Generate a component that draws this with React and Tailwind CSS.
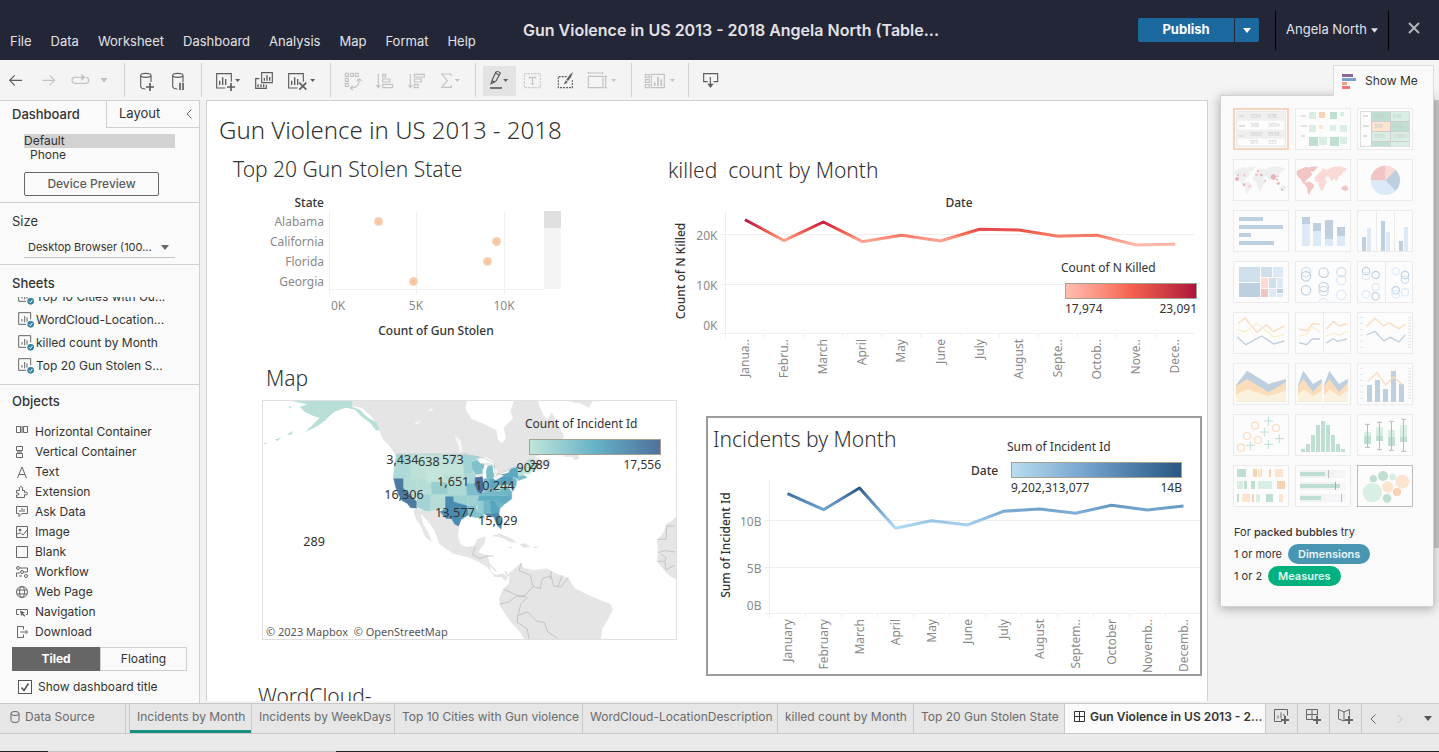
import React, { useState } from "react";

const MONTHS = ["January", "February", "March", "April", "May", "June", "July", "August", "September", "October", "November", "December"];

/* ---------- Header ---------- */

function Caret({ className }) {
  return (
    <svg viewBox="0 0 8 5" className={className} fill="currentColor" aria-hidden="true">
      <path d="M0 0h8L4 5z" />
    </svg>
  );
}

function Header() {
  return (
    <header className="flex h-[60px] shrink-0 bg-[#232636] text-[#e2e2e6]">
      <nav className="flex w-[523px] shrink-0 items-end gap-[19px] pb-[9px] pl-[10px] text-[13px] leading-5">
        {["File", "Data", "Worksheet", "Dashboard", "Analysis", "Map", "Format", "Help"].map((m) => (
          <button key={m} type="button">{m}</button>
        ))}
      </nav>
      <h1 className="min-w-0 flex-1 truncate pt-[18px] text-base leading-6 font-semibold">
        Gun Violence in US 2013 - 2018 Angela North (Table...
      </h1>
      <div className="flex shrink-0 items-start gap-4">
        <div className="mt-[18px] flex gap-px">
          <button type="button" className="h-6 w-24 rounded-l-xs bg-[#1b699f] text-[13px] font-bold text-white">Publish</button>
          <button type="button" aria-label="Publish options" className="flex h-6 w-6 items-center justify-center rounded-r-xs bg-[#1b699f] text-white">
            <Caret className="h-[5px] w-2" />
          </button>
        </div>
        <button type="button" className="mt-[10px] flex h-10 w-[114px] items-center justify-center gap-1 border-x border-black text-[13px]">
          Angela North
          <Caret className="h-[5px] w-[7px]" />
        </button>
        <button type="button" aria-label="Close" className="mt-[22px] mr-[19px] ml-[3px] text-[#b4b4ba]">
          <svg viewBox="0 0 12 12" className="h-3 w-3" stroke="currentColor" strokeWidth="2"><path d="M1 1l10 10M11 1L1 11" /></svg>
        </button>
      </div>
    </header>
  );
}

/* ---------- Toolbar: icons share one drawing sheet, three units to a pixel ---------- */

const DARK = "#5c5c5c";
const LIGHT = "#c2c2c2";

function Tool({ label, x, w, c = DARK, active, children }) {
  return (
    <button type="button" aria-label={label} className="relative h-10 shrink-0" style={{ width: w }}>
      <svg viewBox={`${x * 3} 180 ${w * 3} 120`} className="h-10 w-full" fill="none" stroke={c} strokeWidth="3.4">
        {active && <rect x={x * 3} y="198" width={w * 3} height="90" fill="#e3e3e3" stroke="none" />}
        {children(c)}
      </svg>
    </button>
  );
}
const Sep = () => <span className="my-[3px] w-px shrink-0 self-stretch bg-[#d2d2d2]" />;
const Tri = ({ x, y = 237, c }) => <path d={`M${x - 7.5} ${y}h15l-7.5 9z`} fill={c} stroke="none" />;
const Cyl = ({ x }) => (
  <path d={`M${x} 226v34q2 7 14 7M${x} 226q0-6 15.500-6t15.500 6q0 6-15.500 6t-15.500-6M${x + 31} 226v20`} />
);
const MiniBars = ({ x, y, c }) => (
  <path d={`M${x} ${y}v-13M${x + 9} ${y}v-23M${x + 18} ${y}v-18`} stroke={c} strokeWidth="4" />
);

function Toolbar() {
  return (
    <div className="flex h-[40px] shrink-0 bg-[#f4f4f4]">
      <Tool label="Undo" x={0} w={32}>{() => <path d="M66 241H29M44 226l-15 15 15 15" />}</Tool>
      <Tool label="Redo" x={32} w={33} c={LIGHT}>{() => <path d="M127 241h37M149 226l15 15-15 15" />}</Tool>
      <Tool label="Replay" x={65} w={31} c={LIGHT}>{(c) => (<><path d="M238 232h-14q-8 0-8 9t8 9h34q8 0 8-9t-8-9" /><path d="M238 232h10" /><path d="M244 222l13 10-13 10z" fill={c} stroke="none" /></>)}</Tool>
      <Tool label="Replay options" x={96} w={28} c={LIGHT}>{(c) => <path d="M301 234h22l-11 14z" fill={c} stroke="none" />}</Tool>
      <Sep />
      <Tool label="New data source" x={125} w={37}>{() => (<><Cyl x={422} /><path d="M438 261h24M450 249v24" strokeWidth="5" /></>)}</Tool>
      <Tool label="Pause updates" x={162} w={39}>{() => (<><Cyl x={518} /><path d="M540 248v22M549 248v22" strokeWidth="5" /></>)}</Tool>
      <Sep />
      <Tool label="New worksheet" x={202} w={45}>{(c) => (<><path d="M676 264h-26v-43h44v24" /><MiniBars x={659} y={255} c={c} /><path d="M681 261h24M693 249v24" strokeWidth="5" /><Tri x={713} c={c} /></>)}</Tool>
      <Tool label="Duplicate" x={247} w={33}>{(c) => (<><path d="M785 218h32v30h-32zM778 236h-11v29h32v-11" /><path d="M793 242v-8M801 242v-16M809 242v-11M774 262v-9M783 262v-9M791 262v-9" strokeWidth="4" stroke={c} /></>)}</Tool>
      <Tool label="Clear sheet" x={280} w={50}>{(c) => (<><path d="M893 264h-27v-43h44v24" /><MiniBars x={875} y={255} c={c} /><path d="M898 248l21 21M919 248l-21 21" strokeWidth="5" /><Tri x={938} c={c} /></>)}</Tool>
      <Sep />
      <Tool label="Swap rows and columns" x={331} w={37} c={LIGHT}>{() => (<><path d="M1036 220h9v9h-9zM1051 220h9v9h-9zM1066 220h9v9h-9zM1036 235h9v9h-9zM1036 250h9v9h-9z" /><path d="M1078 238q0 26-25 26M1070 243l8-7 7 7M1059 256l-8 8 8 7" /></>)}</Tool>
      <Tool label="Sort ascending" x={368} w={32} c={LIGHT}>{() => <path d="M1135 222v40M1129 255l6 8 6-8M1148 223h9v8h-9zM1148 237h21v9h-21zM1148 253h30v10h-30z" />}</Tool>
      <Tool label="Sort descending" x={400} w={32} c={LIGHT}>{() => <path d="M1231 222v40M1225 255l6 8 6-8M1243 223h30v8h-30zM1243 237h21v9h-21zM1243 253h11v10h-11z" />}</Tool>
      <Tool label="Totals" x={432} w={43} c={LIGHT}>{(c) => (<><path d="M1353 228v-6h-28l17 20-17 20h29v-7" /><Tri x={1372} c={c} /></>)}</Tool>
      <Sep />
      <span className="w-[7px] shrink-0" />
      <Tool label="Highlight" x={483} w={33} active>{(c) => (<><path d="M1488 216q6-4 13 3l-13 24-9 3-2-7zM1477 239l-4 12 12-5" /><path d="M1485 218l13 8" /><path d="M1470 264h36" strokeWidth="5" /><Tri x={1517} c={c} /></>)}</Tool>
      <Tool label="Show mark labels" x={516} w={33} c={LIGHT}>{() => (<><path d="M1573 221h48v42h-48z" strokeDasharray="7 3" opacity=".8" /><path d="M1588 236v-4h19v4M1597.500 232v20M1592 252h11" /></>)}</Tool>
      <Tool label="Format" x={549} w={33}>{(c) => (<><path d="M1700 230h-25v33h42v-22" strokeDasharray="6 3" /><path d="M1719 216q-13 9-20 23l5 4q11-11 15-27zM1697 241l6 5q-4 7-12 6 5-4 6-11z" fill={c} stroke="none" /></>)}</Tool>
      <Tool label="Fit" x={582} w={49} c={LIGHT}>{(c) => (<><path d="M1765 229h44v34h-44zM1765 219h43M1765 215v8M1808 215v8M1817 229v34M1813 229h8M1813 263h8" /><Tri x={1841} c={c} /></>)}</Tool>
      <Sep />
      <Tool label="Show cards" x={632} w={56} c={LIGHT}>{(c) => (<><path d="M1936 224h12v8h-12zM1936 239h12v8h-12zM1936 254h12v9h-12zM1954 223h39v40h-39z" /><path d="M1964 258v-12M1974 258v-27M1984 258v-20" strokeWidth="5" /><Tri x={2017} c={c} /></>)}</Tool>
      <Sep />
      <Tool label="Download" x={689} w={43}>{(c) => (<><path d="M2123 245h-12v-24h42v24h-12M2131 231v22" /><path d="M2122 251h19l-9.500 13z" fill={c} stroke="none" /></>)}</Tool>
    </div>
  );
}

/* ---------- Sidebar ---------- */

const OBJECTS = [
  ["Horizontal Container", <><path d="M1.500 1.500h4v6h-4zM8.500 1.500h4v6h-4z" /><path d="M6 1h2v7H6z" fill="#aaa" stroke="none" /></>],
  ["Vertical Container", <><path d="M1.500 1.500h6v4h-6zM1.500 8.500h6v4h-6z" /><path d="M2 6h5v2H2z" fill="#aaa" stroke="none" /></>],
  ["Text", <path d="M2.500 13L7 2l4.500 11M4 9.500h6" />],
  ["Extension", <path d="M1.500 5.500h3q-1-4 1.500-4t1.500 4h2v2q3-1.500 3 1t-3 1v3h-8v-2.500q2.500.5 2.500-1t-2.500-1z" />],
  ["Ask Data", <><path d="M1.500 1.500h11v7H7l-3 3v-3H1.500z" /><path d="M5 7V5M7 7V3M9 7V4" /></>],
  ["Image", <><path d="M1.500 1.500h11v11h-11zM2 9l3.500-1L8 10l4-5" /><circle cx="5" cy="5" r="1" fill="#666" /></>],
  ["Blank", <path d="M1.500 1.500h11v11h-11z" />],
  ["Workflow", <><path d="M4.500 3h8v4H8M1.500 12V8H5M4 11h3" /><circle cx="3" cy="3" r="1.500" /><circle cx="7" cy="7" r="1.500" /><circle cx="11" cy="11" r="1.500" /></>],
  ["Web Page", <><circle cx="7" cy="7" r="5.500" /><ellipse cx="7" cy="7" rx="2.500" ry="5.500" /><path d="M2 5h10M2 9h10" /></>],
  ["Navigation", <><path d="M4 9.500H1.500v-5h11v5H11" /><path d="M5 5.500l5 2-2 .8 2.500 2.500-1 1L7 9.500l-.8 2z" fill="#666" stroke="none" /></>],
  ["Download", <path d="M8.500 4.500v-3h-6v11h6v-3M5.500 7h7M10.500 5l2 2-2 2" />],
];

function SheetIcon() {
  return (
    <svg viewBox="0 0 48 48" className="h-4 w-4 shrink-0" fill="none" stroke="#666" strokeWidth="3" aria-hidden="true">
      <path d="M24 37H2V2h36v20" />
      <path d="M12 29v-8M20 31V12M27 29V16" />
      <circle cx="38" cy="37" r="10" fill="#33809f" stroke="none" />
      <path d="M33 37l4 4 6-8" stroke="#fff" />
    </svg>
  );
}

function Sidebar() {
  const [tiled, setTiled] = useState(true);
  const [title, setTitle] = useState(true);
  return (
    <aside className="flex w-[200px] shrink-0 flex-col border-t border-r border-[#cfcfcf] bg-[#fafafa] text-xs text-[#333]">
      <div className="flex h-[27px] shrink-0 text-[13px]">
        <button type="button" className="w-[106px] pl-3 text-left font-medium">Dashboard</button>
        <div className="flex flex-1 items-center justify-between border-b border-l border-[#cfcfcf] pr-[7px] pl-3">
          <button type="button">Layout</button>
          <button type="button" aria-label="Collapse pane">
            <svg viewBox="0 0 6 10" className="h-[10px] w-[6px]" fill="none" stroke="#666"><path d="M5.500 .5L1 5l4.500 4.500" /></svg>
          </button>
        </div>
      </div>

      <section className="flex h-[75px] shrink-0 flex-col border-b border-[#cfcfcf] pt-[6px] pr-6 pl-6">
        <button type="button" className="h-[14px] bg-[#d2d2d2] text-left leading-[14px]">Default</button>
        <button type="button" className="h-[14px] pl-[6px] text-left leading-[14px]">Phone</button>
        <button type="button" className="mt-[10px] h-6 w-[135px] rounded-xs border border-[#666] font-medium text-[#5c5c5c]">Device Preview</button>
      </section>

      <section className="h-[62px] shrink-0 border-b border-[#cfcfcf] pt-[9px]">
        <label htmlFor="size" className="block pl-3 text-[13px] leading-[18px]">Size</label>
        <div className="relative mx-6 mt-[7px] border-b border-[#c4c4c4]">
          <select id="size" className="h-5 w-full appearance-none bg-transparent pl-1 text-[11px] outline-none">
            <option>Desktop Browser (100...</option>
          </select>
          <Caret className="pointer-events-none absolute top-2 right-[6px] h-[5px] w-2 text-[#666]" />
        </div>
      </section>

      <section className="h-[120px] shrink-0 border-b border-[#cfcfcf] pt-2">
        <h2 className="pl-3 text-[13px] leading-5 font-medium">Sheets</h2>
        <ul className="mt-1 flex h-20 flex-col justify-end overflow-hidden">
          {["Top 10 Cities with Gu...", "WordCloud-Location...", "killed count by Month", "Top 20 Gun Stolen S..."].map((s) => (
            <li key={s} className="flex h-[23px] shrink-0 items-center gap-[2px] pl-[18px]">
              <SheetIcon />
              {s}
            </li>
          ))}
        </ul>
      </section>

      <section className="pt-[6px]">
        <h2 className="pl-3 text-[13px] leading-5 font-medium">Objects</h2>
        <ul className="mt-[11px]">
          {OBJECTS.map(([name, icon]) => (
            <li key={name} className="flex h-5 items-center gap-[6px] pl-[15px]">
              <svg viewBox="0 0 14 14" className="h-[14px] w-[14px]" fill="none" stroke="#666" aria-hidden="true">{icon}</svg>
              {name}
            </li>
          ))}
        </ul>
      </section>

      <div className="mt-[5px] mr-3 ml-3 flex h-6 shrink-0">
        <button type="button" onClick={() => setTiled(true)} className="w-[88px] bg-[#666] font-bold text-white">Tiled</button>
        <button type="button" onClick={() => setTiled(!tiled)} className="flex-1 border border-[#cfcfcf]">Floating</button>
      </div>
      <label className="mt-2 ml-[18px] flex items-center gap-[6px] leading-4">
        <span className="relative h-[14px] w-[14px]">
          <input type="checkbox" checked={title} onChange={() => setTitle(!title)} className="block h-[14px] w-[14px] appearance-none border border-[#555] bg-white" />
          {title && (
            <svg viewBox="0 0 14 14" className="pointer-events-none absolute inset-0" fill="none" stroke="#555" strokeWidth="1.600"><path d="M3.500 7.500l2.500 3 4.500-7" /></svg>
          )}
        </span>
        Show dashboard title
      </label>
    </aside>
  );
}

/* ---------- Dashboard views ---------- */

function Legend({ title, bar, min, max, className, barWidth }) {
  return (
    <div className={"absolute text-xs leading-4 font-normal text-[#333] " + className}>
      <div>{title}</div>
      <div className={"mt-[7px] ml-1 h-4 border border-[#a5a08f] " + bar + " " + barWidth} />
      <div className={"mt-[2px] ml-1 flex justify-between " + barWidth}>
        <span>{min}</span>
        <span>{max}</span>
      </div>
    </div>
  );
}

function GunStolen() {
  const rows = [["Alabama", 378.5], ["California", 496.5], ["Florida", 487.5], ["Georgia", 413.5]];
  return (
    <svg viewBox="207 189 461 162" className="block w-full text-xs" fill="#8a8a8a">
      <defs>
        <radialGradient id="dot"><stop offset="0" stopColor="#f8bd90" /><stop offset="1" stopColor="#f4d6bd" /></radialGradient>
      </defs>
      <text x="324" y="207" textAnchor="end" fill="#333" fontWeight="500">State</text>
      <path d="M329.500 211v83M416.500 211v83M504.500 211v83M329 289.500h215" stroke="#f0f0f0" />
      {rows.map(([name, x], i) => (
        <g key={name}>
          <text x="324" y={226 + i * 20} textAnchor="end">{name}</text>
          <circle cx={x} cy={221.5 + i * 20} r="4.500" fill="url(#dot)" />
        </g>
      ))}
      <rect x="544" y="211" width="17" height="78" fill="#f4f4f4" />
      <rect x="544" y="211" width="17" height="17" fill="#e0e0e0" />
      <text x="331" y="310">0K</text>
      <text x="416" y="310" textAnchor="middle">5K</text>
      <text x="504" y="310" textAnchor="middle">10K</text>
      <text x="436" y="335" textAnchor="middle" fill="#333" fontWeight="500">Count of Gun Stolen</text>
    </svg>
  );
}

const STATES = [
  ["#a8d6d6", "425,178 470,178 470,208 420,210"],
  ["#add9d6", "420,208 470,208 468,252 416,252"],
  ["#4e79a0", "417,252 447,252 447,280 488,322 486,340 468,339 458,326 443,318 432,300 424,280"],
  ["#b2dcd6", "447,252 485,252 485,318 447,280"],
  ["#bde1d9", "470,178 482,178 490,205 514,225 514,262 468,252"],
  ["#c0e3da", "480,178 565,178 565,222 500,222 488,200"],
  ["#c3e5dc", "514,222 567,222 567,264 514,264"],
  ["#b6ded7", "485,252 514,252 514,264 530,264 528,300 485,300"],
  ["#a4d3d4", "488,300 528,300 528,348 512,349 486,336"],
  ["#99ced1", "530,262 580,262 580,300 530,300"],
  ["#b7ddd8", "528,300 573,300 573,343 540,345 528,349"],
  ["#bde1da", "567,178 624,178 629,210 567,210"],
  ["#c1e4db", "567,210 629,210 631,240 567,240"],
  ["#b9dfd8", "567,240 631,240 637,268 580,268 567,258"],
  ["#add8d5", "580,268 637,268 638,302 580,302"],
  ["#9bd0d2", "573,302 638,302 638,330 612,326 596,320 596,306 573,306"],
  ["#4a8cb0", "573,306 596,306 596,320 612,326 638,332 642,360 620,374 612,394 600,388 590,370 576,372 556,350 573,345"],
  ["#a2d4d5", "624,178 675,186 656,204 655,235 629,235"],
  ["#acd8d6", "629,235 661,235 666,252 658,265 636,265"],
  ["#7bbdcb", "636,266 660,266 678,296 674,303 638,303"],
  ["#a0d2d3", "638,303 673,303 670,334 640,334"],
  ["#82c2cc", "640,334 664,334 668,352 686,356 690,370 662,368 642,362"],
  ["#80c1cc", "652,204 668,196 688,208 686,236 664,238 655,224"],
  ["#4c6c9b", "663,248 684,246 688,284 680,298 670,290 661,268"],
  ["#73b8c8", "688,252 706,250 706,282 688,290"],
  ["#5ca8c0", "706,250 718,252 734,246 734,270 722,284 706,280"],
  ["#7abdca", "696,216 712,212 720,232 716,250 696,250"],
  ["#77bbca", "678,298 706,282 722,284 734,290 726,303 674,304"],
  ["#60adc3", "674,304 744,303 730,318 670,319"],
  ["#94cbd0", "672,319 688,319 688,358 668,352"],
  ["#72b7c8", "688,319 706,319 710,354 688,356"],
  ["#57a5c0", "706,319 722,319 736,342 734,356 710,354"],
  ["#6bb3c6", "722,319 738,316 752,326 736,342"],
  ["#5fabc3", "744,303 772,300 772,312 752,327 730,318"],
  ["#6fb6c7", "734,286 756,272 772,290 772,300 726,303"],
  ["#b0dad6", "722,284 734,270 748,270 734,290"],
  ["#589fbd", "734,246 774,244 780,258 770,270 734,270"],
  ["#5ba9c1", "740,240 764,232 770,222 790,217 792,252 776,246 742,246"],
  ["#71b7c7", "776,250 786,252 786,268 776,290 768,272"],
  ["#b9dfd8", "790,217 804,214 808,240 792,244"],
  ["#78bccb", "792,244 810,242 818,248 790,258"],
  ["#bde2d9", "806,218 822,194 836,194 848,214 824,238 808,236"],
  ["#4b88ae", "690,357 732,355 742,382 740,403 728,392 718,366 704,366"],
];

const MAP_LABELS = [["3,434", 443, 209], ["638", 523, 215], ["573", 595, 209], ["1,651", 596, 273], ["10,244", 721, 285], ["907", 819, 231], ["16,306", 448, 312], ["13,577", 601, 366], ["15,029", 730, 390], ["289", 178, 453]];

function IncidentMap() {
  return (
    <div className="relative -mr-[9px] ml-[55px] border border-[#e0e0e0]">
      <svg viewBox="24 18 1242 717" className="block w-full" fontSize="38">
        <g fill="#e5e5e5">
          <path d="M293 18H636L634 46 652 72 690 88 726 106 730 132 742 146 754 130 748 98 776 70 768 48 778 18H850L866 60 880 74 892 52 906 80 930 124 912 152 870 176 842 186 862 196 886 190 888 208 852 226 836 214 800 236 700 250 425 186 408 158 384 132 372 104 350 64 320 38 293 34Z" />
          <path d="M928 186l20-34 16 12 12 28-14 4-8-10zM940 18h76l-12 20-22-12z" />
          <path d="M486 340l26 10 30-4 16 4 18 22 14-2 10 18 14 7-4 30 8 22 16 10 24-4 10-20 26-8-4 22-12 16-6 10 28 10 6 24 4 24 12 10 24-4 14 8-6 16-12-14-22 0-20-28-26-16-30-14-48-12-42-30-14-40-24-32-18-18 8 32 16 26 10 28-20-16-12-30-16-24-8-24z" />
          <path d="M764 536l14-12 22-20 8 16 30 6 40-4 26 14 40 16 18 30 30 14 40 18 36 14 8 18-18 34-14 22-4 32H810l-12-20-26-28-20-28-16-24-2-20 10-28 20-20z" />
          <path d="M712 424l24-8 40 18 12 10-22-2-20-12zM794 448l18-2 18 10-20 4zM760 456l14 2-6 4zM838 456h12v4h-12z" />
          <path d="M1266 366l-16 16-12 4-10 28-20 24 4 34-4 28 22 26 18 20 18 8z" />
        </g>
        <g fill="#fff"><path d="M600 122l18 14 6 32-6 4zM478 86l22-10-10 12zM516 52l16-12 4 6z" opacity=".7" /></g>
        <path d="M662 456l-8 24 22 12 22-8 18 0M708 512l18 18M752 530l10 14M800 506l-6 22 34 14 8 34 22 6 6-30 26-8 8 30 22 4 22-30M892 530l-4 24M924 542l-12 32M746 584l24 10 28 14 16-8 22-24M738 628l26-6 26-20 28 6M820 652l-30 12-2 20 30 18 6 30M820 652l26 28 24 4 10 28 30 20M790 664l10-36 18-20M1210 434l26 0 2-40h24M1212 474l20-6 30 4M1212 500l20 0 4 26 26-14M1222 478l14 12-4 10" fill="none" stroke="#bdbdbd" strokeWidth="2.500" />
        <g fill="#b7dfd7">
          <path d="M110 18H293V36l22 8 22 22 30 18 8 22-12 0-16-22-28-20-18-20-28-6-34 12-16 14-14 14-26 18-34 16 24-22 22-22-18-4-28-14-14-14 22-8z" />
          <path d="M100 32l12 4-8 4zM96 118l20-10-8 12zM60 134l18-6-10 10zM26 144l12 0-8 4zM192 72l16-8-6 12z" />
        </g>
        {STATES.map(([fill, points]) => (
          <polygon key={points} points={points} fill={fill} stroke={fill} strokeWidth="1.500" strokeLinejoin="round" />
        ))}
        <path d="M684 226l10-16 6 2-6 18 2 20-10 0zM668 194l24-8 22 12 10 12-24-6-22 2zM716 218l12 8-4 18-8-12zM716 252l24-12 8 2-24 14zM738 234l24-6 0 6-20 4z" fill="#fff" />
        <path d="M425 178H628L636 174 642 180 690 190 720 206 722 236 736 238 776 218 804 212 822 194" fill="none" stroke="#b9c4c2" strokeWidth="2" />
        <path d="M24 690H588v45H24z" fill="#fff" opacity=".75" />
        <g fill="#333" textAnchor="middle">
          {MAP_LABELS.map(([t, x, y]) => <text key={t} x={x} y={y}>{t}</text>)}
        </g>
      </svg>
      <p className="absolute bottom-0 left-[3px] text-[11px] leading-[14px] whitespace-pre text-[#555]">© 2023 Mapbox  © OpenStreetMap</p>
      <Legend title="Count of Incident Id" min="289" max="17,556" className="top-[15px] right-[15px]" barWidth="w-[132px]"
        bar="bg-linear-to-r from-[#c0e5da] via-[#66b2c8] to-[#4f719c]" />
    </div>
  );
}

function MonthChart({ viewBox, id, left, step, top, base, right, grids, points, labelTop, months, zero, yTitle, stops, range, children }) {
  const pts = points.map((y, i) => `${(left + step * (i + 0.5)).toFixed(1)},${y}`).join(" ");
  return (
    <svg viewBox={viewBox} className="block w-full text-xs" fill="#8a8a8a">
      <defs>
        <linearGradient id={id} gradientUnits="userSpaceOnUse" x1="0" x2="0" y1={range[0]} y2={range[1]}>
          {stops.map((c, i) => <stop key={c} offset={i / (stops.length - 1)} stopColor={c} />)}
        </linearGradient>
      </defs>
      <path d={`M${left} ${top}V${base + 4}M${left - 5} ${base}H${right}`} stroke="#eee" />
      {grids.map(([label, y]) => (
        <g key={label}>
          <path d={`M${left - 5} ${y}H${right}`} stroke="#eee" />
          <text x={left - 8} y={y + 5} textAnchor="end">{label}</text>
        </g>
      ))}
      <text x={left - 8} y={base - 4} textAnchor="end">{zero}</text>
      {months.map((m, i) => (
        <g key={m}>
          <path d={`M${left + step * i} ${base}v4`} stroke="#eee" />
          <text transform={`translate(${left + step * (i + 0.5) + 4} ${labelTop}) rotate(-90)`} textAnchor="end">{m}</text>
        </g>
      ))}
      <text transform={`translate(${yTitle[1]} ${yTitle[2]}) rotate(-90)`} textAnchor="middle" fill="#333" fontWeight="500">{yTitle[0]}</text>
      <polyline points={pts} fill="none" stroke={`url(#${id})`} strokeWidth="3" strokeLinejoin="round" />
      {children}
    </svg>
  );
}

const clip = (m, max, keep) => (m.length > max ? m.slice(0, keep) + ".." : m);

const KILLED_MONTHS = ["Janua..", "Febru..", "March", "April", "May", "June", "July", "August", "Septe..", "Octob..", "Nove..", "Dece.."];

function Dashboard() {
  return (
    <main className="flex min-w-0 flex-1 overflow-hidden bg-[#f2f2f2] pr-[231px] pb-[2px] pl-[6px]">
      <div className="min-w-0 flex-1 overflow-hidden border-x border-t border-[#d0d0d0] bg-white font-['Noto_Sans',sans-serif]">
        <h2 className="pt-[13px] pl-3 text-2xl leading-8 font-light text-[#333]">Gun Violence in US 2013 - 2018</h2>
        <div className="grid grid-cols-[461fr_539fr] text-[21px] leading-7 font-light text-[#333]">
          <div className="min-w-0">
            <h3 className="mt-[9px] pl-[26px]">Top 20 Gun Stolen State</h3>
            <div className="mt-[6px] font-normal"><GunStolen /></div>
            <h3 className="mt-[13px] mb-2 pl-[59px]">Map</h3>
            <div className="font-normal"><IncidentMap /></div>
            <h3 className="mt-[42px] pl-[51px]">WordCloud-</h3>
          </div>
          <div className="min-w-0">
            <h3 className="mt-[10px] whitespace-pre">killed  count by Month</h3>
            <div className="relative mt-[5px] font-normal">
              <MonthChart
                id="killed" viewBox="668 189 539 192" left={725.5} step={39.1} top={212} base={333.5} right={1194}
                grids={[["20K", 234.5], ["10K", 284.5]]} zero="0K" labelTop={339}
                points={[219.7, 240.7, 222, 241.7, 235.3, 241, 229.3, 230, 236.3, 235.3, 245, 244.3]}
                months={KILLED_MONTHS}
                yTitle={["Count of N Killed", 685, 271]} range={[219, 246]}
                stops={["#ae123a", "#d92f45", "#f4614f", "#fb9a87", "#ffbeb2"]}
              >
                <text x="959" y="207" textAnchor="middle" fill="#333" fontWeight="500">Date</text>
              </MonthChart>
              <Legend title="Count of N Killed" min="17,974" max="23,091" className="top-[71px] right-[10px]" barWidth="w-[132px]"
                bar="bg-linear-to-r from-[#ffbeb2] via-[#f4614f] to-[#ae123a]" />
            </div>
            <div className="relative mt-[35px] mr-[5px] ml-[38px] border-2 border-[#9c9c9c] pb-px">
              <h3 className="pt-[7px] pl-[5px]">Incidents by Month</h3>
              <div className="mt-[2px] font-normal">
                <MonthChart
                  id="incidents" viewBox="708 456 492 218" left={769.5} step={36} top={481} base={614.5} right={1200}
                  grids={[["10B", 521.5], ["5B", 568.5]]} zero="0B" labelTop={620}
                  points={[494.7, 510.7, 489, 529.3, 521.7, 526, 512.3, 510, 514.3, 506.3, 511, 507]}
                  months={MONTHS.map((m) => (m === "February" ? m : clip(m, 7, 6)))}
                  yTitle={["Sum of Incident Id", 730, 546]} range={[489, 530]}
                  stops={["#2a5783", "#5081b0", "#6fa1cb", "#92c0e0", "#b9ddf1"]}
                >
                  <text x="971" y="476" fill="#333" fontWeight="500">Date</text>
                </MonthChart>
              </div>
              <Legend title="Sum of Incident Id" min="9,202,313,077" max="14B" className="top-[21px] right-[18px]" barWidth="w-[171px]"
                bar="bg-linear-to-r from-[#b9ddf1] via-[#6a9bc7] to-[#2a5783]" />
            </div>
          </div>
        </div>
      </div>
    </main>
  );
}

/* ---------- Show Me panel ---------- */

const B1 = "#bed0df", B2 = "#dce9f7", G1 = "#bfdfd2", G2 = "#d9efe3", O1 = "#f7d3b2", O2 = "#fce4cf", Y = "#faefcf", R1 = "#f1c5c3", R2 = "#fbd9d7", OL = "#fbdcbb";
const boxes = (list) => list.map(([x, y, w, h, f], i) => <rect key={i} x={x} y={y} width={w} height={h} fill={f} />);
const rings = (list, r) => list.map(([x, y, c], i) => <circle key={i} cx={x} cy={y} r={r} fill="none" stroke={c} strokeWidth="3.500" />);
const lines = (list, w = 4) => list.map(([d, c], i) => <path key={i} d={d} fill="none" stroke={c} strokeWidth={w} />);
const nums = (list) => list.map(([x, y, t], i) => <text key={i} x={x} y={y} fontSize="14" fill="#c8c8c8">{t}</text>);

function World({ a, b }) {
  return (
    <>
      <path fill={a} d="M5 36l12-6 14-6 18 2 6 6-8 8 6 6-8 8-10 8-6 10 10 6 0 4-14-8-8-14-8-6-4-8zM44 24l24-2-4 8-10 10-6-8zM32 70l12-2 12 8 0 10-8 8-6 14-4-6-2-16-6-8zM138 88l8-8 10 0 4 10-6 6-10-2z" />
      <path fill={b} d="M76 38l10-8 12 2 14-8 20-2 24 6-4 8-8 2-4 10-8 4-4 10-6 4-4-8-8 10-6-12-6-4-8 4 2 8 4 6-6 8-6 16-6 2-6-16-2-10-10-4-2-10 8-8zM82 28l4-2-2 8-4 0z" />
    </>
  );
}

const THUMBS = [
  ["text table", <>{boxes([[10, 10, 148, 106, "#e2e2e2"], [13, 13, 142, 100, "#fcfcfc"], [13, 13, 142, 25, "#efefef"], [13, 65, 142, 27, "#efefef"], [18, 21, 15, 6, "#dedede"], [18, 51, 18, 6, "#dedede"], [18, 81, 12, 6, "#dedede"]])}{nums([[52, 30, "1234"], [105, 30, "678"], [52, 58, "368"], [105, 58, "3034"], [52, 84, "2620"], [105, 84, "2559"], [52, 108, "971"], [105, 108, "322"]])}</>],
  ["heat map", boxes([[18, 21, 15, 6, "#e4e4e4"], [18, 51, 18, 6, "#e4e4e4"], [18, 81, 12, 6, "#e4e4e4"], [42, 12, 21, 21, G2], [72, 12, 18, 18, O1], [105, 12, 21, 21, G1], [135, 12, 12, 12, G2], [42, 51, 21, 21, G2], [72, 51, 12, 12, O2], [105, 51, 18, 18, G2], [135, 51, 21, 21, G2], [42, 87, 27, 27, G1], [72, 87, 24, 24, G2], [105, 87, 27, 27, G1], [135, 87, 21, 21, G2]])],
  ["highlight table", <>{boxes([[9, 9, 150, 108, "#ddd"], [12, 12, 144, 102, "#fcfcfc"], [18, 21, 15, 6, "#dedede"], [18, 51, 18, 6, "#dedede"], [18, 81, 12, 6, "#dedede"], [42, 12, 115, 102, "#cfcfcf"], [45, 12, 54, 27, G1], [102, 12, 54, 27, G2], [45, 42, 54, 27, O2], [102, 42, 54, 27, G1], [45, 72, 54, 27, G2], [102, 72, 54, 27, G2], [45, 102, 54, 12, G1], [102, 102, 54, 12, G2]])}{nums([[50, 30, "1234"], [108, 30, "546"], [50, 60, "368"], [108, 60, "340"], [50, 90, "2620"], [108, 90, "53890"]])}</>],
  ["symbol map", <><World a="#efefef" b="#efefef" />{[[12, 60, 6, "#e6b3b8"], [15, 48, 3, "#e6b3b8"], [34, 48, 4, "#f6c8c8"], [75, 36, 4, "#f1b9b9"], [70, 47, 4, "#f6c8c8"], [85, 48, 4, "#e6b3b8"], [121, 54, 8, "#e6b3b8"], [96, 66, 4, "#f6c8c8"], [132, 62, 3, "#e6b3b8"], [136, 73, 5, "#f1b9b9"], [33, 77, 4, "#e6b3b8"], [50, 82, 5, "#fbd3d3"], [147, 92, 3, "#e6b3b8"], [135, 52, 3, "#f1b9b9"]].map(([x, y, r, f], i) => <circle key={i} cx={x} cy={y} r={r} fill={f} />)}</>],
  ["filled map", <World a={R1} b={R2} />],
  ["pie chart", <><circle cx="85" cy="64" r="44" fill={B2} /><path d="M85 64V20A44 44 0 0 0 41 64z" fill={R1} /><path d="M85 64V20A44 44 0 0 1 116 33z" fill={R2} /><path d="M85 64L116 33A44 44 0 0 1 116 95z" fill={B1} /></>],
  ["horizontal bars", boxes([[18, 21, 72, 12, B1], [18, 45, 132, 12, B1], [18, 69, 36, 12, B1], [18, 93, 105, 12, B1]])],
  ["stacked bars", boxes([[21, 21, 24, 21, B1], [21, 42, 24, 66, B2], [54, 39, 24, 24, B1], [54, 63, 24, 45, B2], [90, 30, 24, 57, B1], [90, 87, 24, 21, B2], [126, 51, 24, 27, B1], [126, 78, 24, 30, B2]])],
  ["side-by-side bars", boxes([[57, 0, 3, 126, "#ebebeb"], [111, 0, 3, 126, "#ebebeb"], [15, 81, 12, 42, B1], [30, 54, 12, 69, B2], [72, 33, 12, 90, B1], [87, 66, 12, 57, B2], [126, 93, 12, 30, B1], [141, 51, 12, 72, B2]])],
  ["treemap", boxes([[18, 18, 63, 45, "#cfdfeb"], [18, 66, 63, 42, B1], [84, 18, 33, 30, "#cfdfeb"], [120, 18, 30, 30, B2], [84, 51, 21, 30, R2], [108, 51, 21, 30, "#cfdfeb"], [132, 51, 18, 30, B2], [84, 84, 21, 24, R1], [108, 84, 21, 24, B2], [132, 84, 18, 12, B1], [132, 99, 18, 9, B2]])],
  ["circle views", rings([[33, 33, "#cfdfeb"], [33, 46, B1], [33, 88, B1], [86, 35, B1], [86, 78, B1], [86, 90, "#cfdfeb"], [86, 126, B2], [139, 34, "#cfdfeb"], [139, 57, B2], [139, 102, B2]], 14)],
  ["side-by-side circles", <>{boxes([[84, 0, 3, 126, "#ebebeb"]])}{rings([[27, 30, B1], [27, 45, B2], [56, 42, B1], [56, 78, B2], [27, 100, B2], [56, 106, B1], [116, 31, B2], [144, 42, B1], [144, 56, "#cfdfeb"], [116, 88, B1], [116, 100, B2], [144, 94, B2]], 11)}</>],
  ["lines continuous", lines([["M16 34L36 18 72 61 100 38 122 59 154 42", OL], ["M13 52L36 60 71 34 122 75 154 68", Y], ["M13 75L38 98 86 72 122 96 154 87", B1]])],
  ["lines discrete", <>{boxes([[84, 0, 3, 126, "#ebebeb"]])}{lines([["M12 51L36 56 53 35 75 37M94 51L116 28 132 42 156 36", OL], ["M12 72L34 67 54 46 75 60M94 72L114 64 134 69 156 58", Y], ["M12 92L34 98 52 81 75 81M94 93L114 80 128 88 156 81", B1]])}</>],
  ["dual lines", <>{lines([["M9 16h9M9 34h9M9 52h9M9 69h9M9 87h9M9 106h9M153 16h9M153 25h9M153 34h9M153 43h9M153 52h9M153 61h9M153 70h9M153 79h9M153 88h9M153 97h9M153 106h9", "#e4e4e4"]], 3)}{lines([["M28 43L54 19 80 42 96 32 126 50 145 36", OL], ["M28 69L54 58 80 87 100 76 126 90 145 68", B1]])}</>],
  ["area continuous", <><path d="M9 66L42 23 107 63 159 48V116H9z" fill={B1} /><path d="M9 70L42 48 107 87 159 57V116H9z" fill={OL} /><path d="M9 95L42 79 107 99 159 83V116H9z" fill="#faf1df" /></>],
  ["area discrete", [0, 78].map((o) => <g key={o} transform={`translate(${o} 0)`}><path d="M9 66L25 23 54 63 81 47V116H9z" fill={B1} /><path d="M9 70L25 48 54 87 81 57V116H9z" fill={OL} /><path d="M9 95L25 79 54 99 81 83V116H9z" fill="#faf1df" /><path d="M83 20v100" stroke="#fcfcfc" strokeWidth="5" /></g>)],
  ["dual combination", <>{lines([["M9 16h9M9 34h9M9 52h9M9 69h9M9 87h9M9 106h9M153 16h9M153 25h9M153 34h9M153 43h9M153 52h9M153 61h9M153 70h9M153 79h9M153 88h9M153 97h9M153 106h9", "#e4e4e4"]], 3)}{boxes([[30, 66, 15, 51, B1], [54, 51, 15, 66, B1], [78, 78, 15, 39, B1], [102, 24, 15, 93, B1], [126, 63, 15, 54, B1]])}{lines([["M32 55L60 29 86 66 110 42 137 66", OL]])}</>],
  ["scatter plot", <>{rings([[66, 35, OL], [129, 42, OL], [42, 66, OL], [75, 78, OL], [24, 101, OL]], 10.5)}{lines([["M93 21h27M106 8v27M81 54h27M94 41v27M126 74h27M139 61v27M93 91h27M106 78v27M39 94h27M52 81v27", G1]], 3)}</>],
  ["histogram", boxes([9, 24, 51, 81, 93, 81, 51, 24, 9].map((h, i) => [18 + i * 15, 114 - h, 12, h, G1]))],
  ["box plot", <>{boxes([[21, 54, 21, 12, G2], [21, 66, 21, 24, G1], [57, 39, 21, 27, G2], [57, 66, 21, 15, G1], [93, 48, 21, 21, G2], [93, 69, 21, 27, G1], [129, 33, 21, 36, G2], [129, 69, 21, 15, G1]])}{lines([["M24 31h15M24 100h15M31.500 31v69M60 25h15M60 107h15M67.500 25v82M96 22h15M96 109h15M103.500 22v87M132 16h15M132 112h15M139.500 16v96", "#bbb"]], 3)}</>],
  ["gantt", boxes([[12, 12, 27, 24, G1], [60, 12, 12, 24, O1], [75, 12, 12, 24, O2], [108, 12, 6, 24, O1], [126, 12, 24, 24, O2], [12, 48, 18, 24, G2], [33, 48, 9, 24, G1], [54, 48, 12, 24, G1], [75, 48, 42, 24, G2], [132, 48, 24, 24, O1], [12, 87, 6, 24, G1], [27, 87, 24, 24, O2], [57, 87, 6, 24, O1], [69, 87, 12, 24, G2], [99, 87, 21, 24, G1], [138, 87, 12, 24, O2]])],
  ["bullet graph", boxes([[15, 15, 138, 24, "#f6f6f8"], [15, 15, 105, 24, "#f2f2f2"], [15, 51, 138, 24, "#f6f6f8"], [15, 51, 105, 24, "#f2f2f2"], [15, 87, 138, 24, "#f6f6f8"], [15, 87, 75, 24, "#f2f2f2"], [15, 21, 75, 12, G1], [15, 57, 120, 12, G1], [15, 93, 63, 12, G1], [99, 15, 3, 24, "#bbb"], [120, 51, 3, 24, "#aaa"], [138, 87, 3, 24, "#bbb"]])],
  ["packed bubbles", [[46, 83, 29, G2], [49, 41, 11, G1], [78, 33, 15, G1], [107, 36, 10, G2], [92, 66, 17, O2], [136, 50, 21, O2], [120, 81, 12, O1], [90, 100, 13, G1]].map(([x, y, r, f], i) => <circle key={i} cx={x} cy={y} r={r} fill={f} />)],
];

function ShowMe() {
  return (
    <div className="absolute top-[65px] right-[5px] flex w-[214px] flex-col items-end text-xs text-[#333]">
      <button type="button" className="relative z-10 -mb-px flex h-[31px] w-[101px] items-center gap-[9px] border border-b-0 border-[#dcdcdc] bg-[#fafafa] pl-2">
        <svg viewBox="0 0 14 15" className="h-[15px] w-[14px]" aria-hidden="true">
          <path d="M0 0h11v3H0z" fill="#85699a" /><path d="M0 4h14v3H0z" fill="#7d9fcb" /><path d="M0 8h5v3H0z" fill="#f8a07c" /><path d="M0 12h8v3H0z" fill="#f9717f" />
        </svg>
        Show Me
      </button>
      <section className="w-full border border-[#d2d2d2] bg-[#fafafa] pt-3 pb-5 pl-3 shadow-[0_2px_10px_rgba(0,0,0,0.3)]">
        <div className="grid grid-cols-[repeat(3,56px)] gap-x-[6px] gap-y-[9px]">
          {THUMBS.map(([name, art], i) => (
            <button key={name} type="button" aria-label={name} className={"h-[42px] overflow-hidden bg-[#fcfcfc] " + (i === 0 ? "outline-2 -outline-offset-2 outline-[#f7d2bd]" : i === 23 ? "outline-1 -outline-offset-1 outline-[#bdbdbd]" : "outline-1 -outline-offset-1 outline-[#ebebeb]")}>
              <svg viewBox="0 0 168 126" className="block h-[42px] w-14">{art}</svg>
            </button>
          ))}
        </div>
        <div className="mt-[15px] flex flex-col gap-[2px] pl-px text-[11px] leading-5">
          <p>For <span className="font-medium">packed bubbles</span> try</p>
          <p className="flex gap-[6px]">1 or more <span className="rounded-full bg-[#4996b2] px-[10px] font-semibold text-[#e9f5fa]">Dimensions</span></p>
          <p className="flex gap-[6px]">1 or 2 <span className="rounded-full bg-[#00b180] px-[10px] font-semibold text-[#e2faf2]">Measures</span></p>
        </div>
      </section>
    </div>
  );
}

/* ---------- Sheet tabs ---------- */

const TABS = [["Incidents by Month", "w-[122px]"], ["Incidents by WeekDays", "w-[143px]"], ["Top 10 Cities with Gun violence", "w-[188px]"], ["WordCloud-LocationDescription", "w-[195px]"], ["killed count by Month", "w-[136px]"], ["Top 20 Gun Stolen State", "w-[151px]"]];
const NEW = [
  ["New worksheet", "M8 12.500H.5V.5h13v6M4 9.500v-3M7 9.500v-6M10 7v-2"],
  ["New dashboard", "M8 10.500H.5V.5h11v6M.5 5.500h11M6 .5v10"],
  ["New story", "M8 10.500L6 12 .5 10V.5L6 3l5.500-2.500v6M6 3v9"],
];

function SheetTabs() {
  return (
    <footer className="shrink-0">
      <div className="flex h-[31px] border-y border-[#c9c9c9] bg-[#e6e6e6] text-xs text-[#6b6b6b]">
        <button type="button" className="flex w-[126px] items-center gap-[5px] border-r border-[#c9c9c9] pb-1 pl-[10px]">
          <svg viewBox="0 0 10 12" className="h-3 w-[10px]" fill="none" stroke="#666"><ellipse cx="5" cy="2.500" rx="4" ry="2" /><path d="M1 2.500v7q0 2 4 2t4-2v-7" /></svg>
          Data Source
        </button>
        <span className="w-1 border-r border-[#c9c9c9]" />
        <nav className="flex min-w-0">
          {TABS.map(([t, w], i) => (
            <button key={t} type="button" className={"shrink-0 border-r border-[#c9c9c9] pb-1 pl-[7px] text-left whitespace-nowrap " + w + (i === 0 ? " shadow-[inset_0_-3px_0_#1a9080]" : "")}>{t}</button>
          ))}
          <button type="button" className="flex w-[201px] shrink-0 items-center gap-[5px] border-r border-[#c9c9c9] bg-[#fafafa] pb-1 pl-[9px] font-semibold whitespace-nowrap text-[#333]">
            <svg viewBox="0 0 11 11" className="h-[11px] w-[11px]" fill="none" stroke="#333"><path d="M.5.5h10v10H.5zM.5 5.500h10M5.500.5v10" /></svg>
            Gun Violence in US 2013 - 2...
          </button>
        </nav>
        {NEW.map(([label, d]) => (
          <button key={label} type="button" aria-label={label} className="flex w-8 shrink-0 items-center justify-center border-r border-[#c9c9c9] pb-1">
            <svg viewBox="0 0 16 15" className="h-[15px] w-4" fill="none" stroke="#666"><path d={d} /><path d="M7 11h8M11 7v8" strokeWidth="2" /></svg>
          </button>
        ))}
        <div className="flex flex-1 items-center justify-between pr-[7px] pl-2">
          <button type="button" aria-label="Previous"><svg viewBox="0 0 6 10" className="h-[10px] w-[6px]" fill="none" stroke="#666"><path d="M5.500.5L1 5l4.500 4.500" /></svg></button>
          <button type="button" aria-label="Next"><svg viewBox="0 0 6 10" className="h-[10px] w-[6px]" fill="none" stroke="#c4c4c4"><path d="M.5.5L5 5 .5 9.500" /></svg></button>
          <button type="button" aria-label="All sheets"><Caret className="h-[5px] w-2 text-[#555]" /></button>
        </div>
      </div>
      <div className="flex h-[18px] items-end bg-[#eaeaea]">
        <span className="h-px w-12 bg-[#222]" />
        <span className="h-px w-72 bg-[#c4c4c4]" />
        <span className="h-px flex-1 bg-[#222]" />
      </div>
    </footer>
  );
}

export default function App() {
  return (
    <div className="relative flex h-screen flex-col overflow-hidden bg-[#f2f2f2] font-['Inter',sans-serif]">
      <Header />
      <Toolbar />
      <div className="flex min-h-0 flex-1">
        <Sidebar />
        <Dashboard />
      </div>
      <SheetTabs />
      <span className="absolute top-[100px] right-0 h-[448px] w-[5px] bg-[#c9c9c9]" />
      <ShowMe />
    </div>
  );
}
